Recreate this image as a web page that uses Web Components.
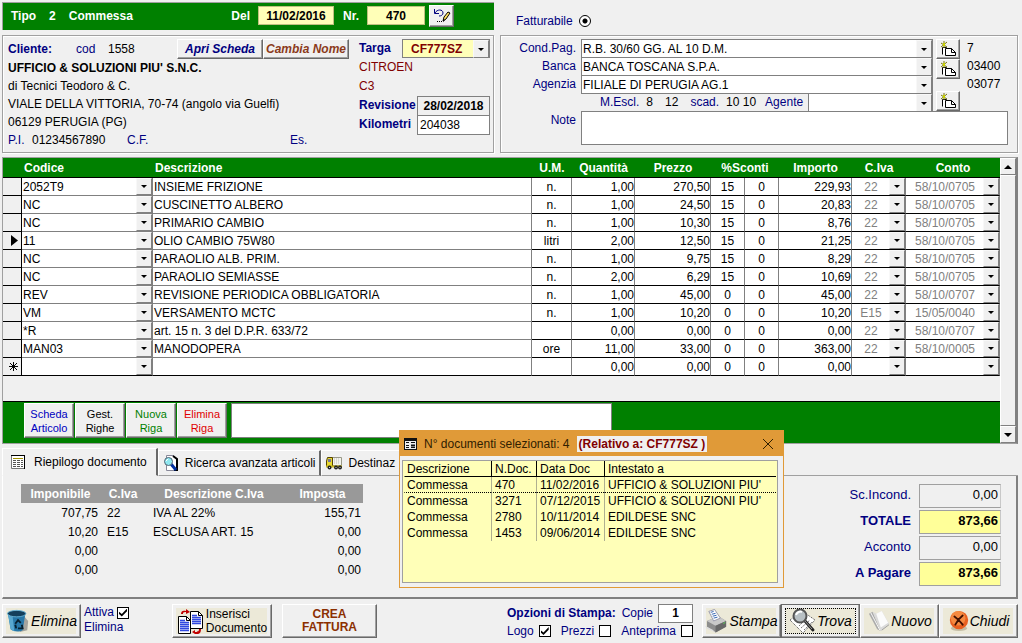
<!DOCTYPE html>
<html lang="it">
<head>
<meta charset="utf-8">
<title>Commessa 470</title>
<style>
  html { background: #f0f0f0; }
  body { margin: 0; font: 12px/18px "Liberation Sans", Arial, sans-serif; color: #000; }
</style>
</head>
<body>
<order-page></order-page>

<script>
/* Shared by every element that holds fields */
const FIELD_CSS = `
  * { box-sizing: border-box; }
  input, select, textarea { font: inherit; color: inherit; margin: 0; border-radius: 0; outline: 0; }
  .navy { color: #000080; }
  .text { border: 1px solid #808080; background: #fff; padding: 0 2px; min-width: 0; }
  .yellow { background: #ffffb8; }
  b, .bold { font-weight: 700; }
  .tick {
    appearance: none; width: 12px; height: 12px; flex: none;
    border: 1px solid #000; background: #fff; display: inline-grid; place-content: center;
  }
  .tick:checked::before {
    content: ""; width: 8px; height: 8px; background: #000;
    clip-path: polygon(0 40%, 35% 70%, 100% 0, 100% 35%, 35% 100%, 0 70%);
  }
`;

const ICONS = {
  undo: `<svg width="18" height="16" viewBox="0 0 18 16" fill="none"><path d="M1.500 1v4.500h4.500M2 5c2-4 8-4 8 0 0 2-2 3-4 3" stroke="#000080"/><path d="M10 13l1-4 4-5 2 1-4 6z" fill="#ffe060" stroke="#000"/><path d="M10 11v3l2-2zM4 13h1v1H4zM6 13h1v1H6zM8 13h1v1H8z" fill="#000"/></svg>`,
  add: `<svg width="16" height="16" viewBox="0 0 16 16" fill="none"><path d="M2.500 13.500v-7h4v7" fill="#fff" stroke="#000"/><path d="M5.500 14.500v-7h6l4 4v3z" fill="#fff" stroke="#000"/><path d="M11.500 7.500v4h4" stroke="#000"/><path d="M1 2l6 4M7 1L1 6M4 0v7" stroke="#77770a"/><path d="M3 2h2v3H3z" fill="#c8d000"/></svg>`,
  sheet: `<svg width="15" height="14" viewBox="0 0 15 14"><path d="M.5.5h13v13H.5z" fill="#fff" stroke="#777"/><path d="M0 .5h14M13.500 0v14" stroke="#000"/><path d="M2 3.500h10M2 5.500h10M2 7.500h10M2 9.500h10M2 11.500h10" stroke="#555" stroke-dasharray="3 1"/><path d="M2 3.500h10" stroke="#a09000"/></svg>`,
  lookup: `<svg width="16" height="16" viewBox="0 0 16 16"><path d="M3.500.5h7l3 3v12h-10z" fill="#fff" stroke="#889"/><path d="M10 1l4 3v11h-3" fill="none" stroke="#000" stroke-width="2"/><path d="M8 9l5 6" stroke="#0030a0" stroke-width="3"/><circle cx="5.500" cy="6.500" r="4" fill="#90e8f0" stroke="#506070"/><path d="M3 6l2-2" stroke="#fff"/></svg>`,
  truck: `<svg width="16" height="14" viewBox="0 0 16 14"><path d="M6.500 1.500h9v8h-9z" fill="#f4f4ec" stroke="#998"/><path d="M8 3h6M8 5h6M8 7h6" stroke="#bbb" stroke-dasharray="1 1"/><path d="M.5 5l1-3.500h5v9H.5z" fill="#e8d830" stroke="#554400"/><path d="M2 3h3v3H2z" fill="#779"/><path d="M0 9.500h16v2H0z" fill="#c8b820"/><circle cx="3.500" cy="11.500" r="2" fill="#222"/><circle cx="10" cy="11.500" r="2" fill="#222"/><circle cx="14" cy="11.500" r="2" fill="#222"/><path d="M3 11h1v1H3zM9.500 11h1v1h-1zM13.500 11h1v1h-1z" fill="#ccc"/></svg>`,
  form: `<svg width="13" height="12" viewBox="0 0 13 12"><path d="M0 0h13v12H0z" fill="#111"/><path d="M1 3h11v8H1z" fill="#eee"/><path d="M2 4.500h3M2 7.500h3M2 9.500h3M7 4.500h4M7 9.500h4" stroke="#111"/><path d="M7 6.500h4v2H7z" fill="#111"/></svg>`,
  bin: `<svg width="25" height="24" viewBox="0 0 27 26"><path d="M17 5l7 8-1 10-8 2z" fill="#777" opacity=".6"/><path d="M2 5l3 17c3 3 10 3 13 1l3-18z" fill="#2878a8"/><path d="M2 5l3 17 4 2L7 7z" fill="#58a8d0"/><ellipse cx="11.500" cy="5" rx="10" ry="3.500" fill="#15405c" stroke="#68b4d8"/><path d="M10 16l3-4 3 3M17 17l1 4h-5M11 21l-1-4" fill="none" stroke="#06202f" stroke-width="2"/></svg>`,
  copy: `<svg width="27" height="26" viewBox="0 0 27 26"><path d="M13.500 3.500h8l4 4v13h-12z" fill="#fff" stroke="#000"/><path d="M21.500 3.500v4h4" fill="none" stroke="#000"/><path d="M15 7.500h5M15 9.500h9M15 11.500h9M15 13.500h9M15 15.500h9" stroke="#3048e0" stroke-width="1.500"/><path d="M1.500 8.500h8l4 4v13h-12z" fill="#fff" stroke="#000"/><path d="M9.500 8.500v4h4" fill="none" stroke="#000"/><path d="M3 12.500h5M3 14.500h9M3 16.500h9M3 18.500h9M3 20.500h9M3 22.500h9" stroke="#3048e0" stroke-width="1.500"/><path d="M4 6c0-3 2-4 5-3V1l4 3-4 2V4C6 4 6 5 6 6zM22 21c0 3-2 3-4 3v-2l-3 2 3 2h2c3 0 4-2 4-5z" fill="#c00000"/></svg>`,
  printer: `<svg width="24" height="26" viewBox="1 0 25 26"><path d="M3 13l12-5 8 5v6l-11 6-9-6z" fill="#8d8d8d"/><path d="M3 13l12-5 8 5-11 5z" fill="#c9c9c9"/><path d="M12 18l11-5v6l-11 6z" fill="#686868"/><path d="M5 3l6-2 6 9-7 3z" fill="#fff" stroke="#99a"/><path d="M7 4l3-1M8 6l4-1M9 8l4-1M10 10l4-1" stroke="#3060b0"/><path d="M1 18l8 4 3 3-9-4z" fill="#ddd"/><path d="M20 15l2-1v1l-2 1z" fill="#5c5"/></svg>`,
  find: `<svg width="28" height="26" viewBox="0 0 28 26"><path d="M1 12L13 3l13 9-12 13z" fill="#fff" stroke="#444" stroke-dasharray="1 1"/><path d="M12 20l9-8M10 18l8-8M15 22l8-8" stroke="#777" stroke-dasharray="2 1"/><path d="M16 13l8 9" stroke="#222" stroke-width="3" stroke-linecap="round"/><path d="M16 13l7 8" stroke="#999"/><circle cx="11" cy="8" r="6.500" fill="#b8c0c4" stroke="#555" stroke-width="2"/><path d="M7 7c1-3 4-4 6-3" stroke="#fff" stroke-width="2" fill="none"/></svg>`,
  page: `<svg width="24" height="22" viewBox="0 0 24 24"><path d="M1 4l9 17 4 2L5 2z" fill="#aaa"/><path d="M5 2l4 2 6-3 8 14-9 8z" fill="#dadada"/><path d="M9 4l6-3 7 13-8 5z" fill="#fbfbfb"/><path d="M3 3l10 19" stroke="#fff"/><path d="M15 22l8-6" stroke="#999"/></svg>`,
  close: `<svg width="22" height="22" viewBox="0 0 22 24"><ellipse cx="11" cy="20" rx="9" ry="3" fill="#c4bda4"/><circle cx="11" cy="11" r="10" fill="#e86020"/><circle cx="10" cy="9" r="8" fill="#f58a40"/><path d="M6 7c3 2 6 5 9 9M15 6c-4 3-6 6-8 10" stroke="#401000" stroke-width="2" stroke-linecap="round" fill="none"/></svg>`
};

/* <ui-icon name> — inline drawing from ICONS */
class UiIcon extends HTMLElement {
  constructor() {
    super();
    this.attachShadow({ mode: 'open' });
  }
  connectedCallback() {
    this.shadowRoot.innerHTML = `
      <style>:host { display: inline-flex; flex: none; } svg { display: block; }</style>
      ${ICONS[this.getAttribute('name')] || ''}
    `;
  }
}
customElements.define('ui-icon', UiIcon);

/* <raised-button> — bevelled push button. Attributes: name (accessible name), focused, art */
class RaisedButton extends HTMLElement {
  constructor() {
    super();
    this.attachShadow({ mode: 'open' });
  }
  connectedCallback() {
    const name = this.getAttribute('name');
    this.shadowRoot.innerHTML = `
      <style>
        :host { display: flex; flex: none; }
        button {
          flex: 1; min-width: 0; box-sizing: border-box; padding: 0; margin: 0;
          display: flex; align-items: center; justify-content: center;
          font: inherit; color: inherit; text-align: center; white-space: nowrap;
          background: #f0f0f0; border: 1px solid; border-color: #fff #696969 #696969 #fff;
          box-shadow: inset -1px -1px 0 #a0a0a0;
        }
        :host([art]) button {
          padding: 2px 3px; background: #ece9d8; font: italic 14px/18px "Liberation Sans", Arial, sans-serif;
          box-shadow: inset -1px -1px 0 #a0a0a0, inset 3px 3px 0 #f0f0f0, inset -4px -3px 0 #f0f0f0;
        }
        :host([focused]) button { border-color: #696969; outline: 1px dotted #000; outline-offset: -5px; }
      </style>
      <button type="button" ${name ? `aria-label="${name}"` : ''}><slot></slot></button>
    `;
  }
}
customElements.define('raised-button', RaisedButton);

/* <combo-box> — dresses the slotted <select> with a bevelled arrow */
class ComboBox extends HTMLElement {
  constructor() {
    super();
    this.attachShadow({ mode: 'open' });
    this.shadowRoot.innerHTML = `
      <style>
        :host { display: grid; min-width: 0; box-sizing: border-box; background: #fff; }
        :host([boxed]) { border: 1px solid #808080; }
        ::slotted(select) {
          grid-area: 1 / 1; appearance: none; width: 100%; min-width: 0; border: 0;
          padding: 0 18px 0 1px; background: transparent; height: 100%;
        }
        .arrow {
          grid-area: 1 / 1; justify-self: end; width: 16px; pointer-events: none; box-sizing: border-box;
          display: grid; place-content: center; background: #f0f0f0;
          border: 1px solid; border-color: #f8f8f8 #808080 #808080 #f8f8f8;
        }
        .arrow::before { content: ""; border: 3px solid transparent; border-top-color: #000; border-bottom: 0; }
      </style>
      <slot></slot><span class="arrow"></span>
    `;
  }
}
customElements.define('combo-box', ComboBox);

/* <group-panel> — etched frame */
class GroupPanel extends HTMLElement {
  constructor() {
    super();
    this.attachShadow({ mode: 'open' });
    this.shadowRoot.innerHTML = `
      <style>
        :host {
          display: block; box-sizing: border-box; border: 1px solid #a0a0a0;
          box-shadow: inset 1px 1px 0 #fff, 1px 1px 0 #fff;
        }
      </style>
      <slot></slot>
    `;
  }
}
customElements.define('group-panel', GroupPanel);

class OrderHeader extends HTMLElement {
  constructor() {
    super();
    this.attachShadow({ mode: 'open' });
    this.shadowRoot.innerHTML = `
      <style>
        ${FIELD_CSS}
        :host { display: grid; grid-template-columns: minmax(0, 492fr) minmax(0, 518fr); gap: 6px; }
        .bar {
          display: flex; align-items: center; gap: 13px; height: 28px; padding: 0 40px 2px 8px;
          background: #008000; color: #fff; font-weight: 700; border: 1px solid #a0a0a0; border-width: 1px 0 0 1px;
        }
        .del { margin-left: auto; }
        label { display: flex; align-items: center; gap: 8px; }
        .text { height: 19px; color: #000; text-align: center; font-weight: 700; border-color: #c0c080; }
        .date { width: 76px; }
        .nr { width: 58px; }
        .tools { display: flex; align-items: center; gap: 4px; margin-left: -4px; }
        raised-button { width: 25px; height: 22px; }
        .bill { align-self: end; justify-self: start; margin: 2px 0 0 16px; height: 18px; color: #000080; gap: 6px; }
        .radio {
          appearance: none; width: 12px; height: 12px; border: 1px solid #000; border-radius: 50%; margin: 0;
          background: radial-gradient(circle, #000 0 2px, #fff 3px);
        }
      </style>
      <div class="bar">
        <span>Tipo</span><span>2</span><span>Commessa</span>
        <label class="del">Del <input class="text yellow date" value="11/02/2016"></label>
        <div class="tools">
          <label>Nr. <input class="text yellow nr" value="470"></label>
          <raised-button name="Modifica numero"><ui-icon name="undo"></ui-icon></raised-button>
        </div>
      </div>
      <label class="bill">Fatturabile <input class="radio" type="radio" name="tipo" checked></label>
    `;
  }
}
customElements.define('order-header', OrderHeader);

class CustomerPanel extends HTMLElement {
  constructor() {
    super();
    this.attachShadow({ mode: 'open' });
    this.shadowRoot.innerHTML = `
      <style>
        ${FIELD_CSS}
        :host { display: block; }
        group-panel { height: 118px; display: flex; gap: 10px; padding: 3px 3px 0 5px; }
        .who { flex: 1; min-width: 0; white-space: nowrap; }
        .row { display: flex; height: 18px; }
        .first { height: 20px; align-items: center; }
        .label { width: 68px; }
        .cod { width: 32px; }
        .actions { display: flex; margin-left: auto; font-weight: 700; font-style: italic; }
        .actions raised-button { width: 86px; height: 20px; }
        .pi { width: 24px; }
        .vat { width: 95px; }
        .cf { width: 163px; }
        .car { flex: none; width: 131px; display: grid; grid-template-columns: 43px 15px 73px; grid-auto-rows: 19px; color: #000080; }
        .car label { font-weight: 700; }
        .car .wide { grid-column: 1 / 3; }
        .car .model { grid-column: 1 / 4; color: #800000; }
        .car combo-box { grid-column: 2 / 4; background: #ffffb8; color: #800000; font-weight: 700; }
        .car select { padding-left: 8px; }
        .car .text { color: #000; height: 20px; }
        .car .rev { background: #f0f0f0; text-align: center; font-weight: 700; }
      </style>
      <group-panel>
        <div class="who">
          <div class="row first">
            <b class="navy label">Cliente:</b><span class="navy cod">cod</span><span>1558</span>
            <div class="actions">
              <raised-button class="navy">Apri Scheda</raised-button>
              <raised-button style="color: #8b3a1a">Cambia Nome</raised-button>
            </div>
          </div>
          <div class="row"><b>UFFICIO &amp; SOLUZIONI PIU' S.N.C.</b></div>
          <div class="row">di Tecnici Teodoro &amp; C.</div>
          <div class="row">VIALE DELLA VITTORIA, 70-74 (angolo via Guelfi)</div>
          <div class="row">06129 PERUGIA (PG)</div>
          <div class="row"><span class="navy pi">P.I.</span><span class="vat">01234567890</span><span class="navy cf">C.F.</span><span class="navy">Es.</span></div>
        </div>
        <div class="car">
          <label for="targa">Targa</label>
          <combo-box boxed><select id="targa"><option>CF777SZ</option></select></combo-box>
          <span class="model">CITROEN</span>
          <span class="model">C3</span>
          <label class="wide" for="rev">Revisione</label><input class="text rev" id="rev" value="28/02/2018">
          <label class="wide" for="km">Kilometri</label><input class="text" id="km" value="204038">
        </div>
      </group-panel>
    `;
  }
}
customElements.define('customer-panel', CustomerPanel);

class PaymentPanel extends HTMLElement {
  constructor() {
    super();
    this.attachShadow({ mode: 'open' });
    this.shadowRoot.innerHTML = `
      <style>
        ${FIELD_CSS}
        :host { display: block; }
        group-panel { height: 118px; padding: 3px 9px 0 0; }
        .top { display: flex; }
        .fields { flex: 1; min-width: 0; display: grid; grid-template-columns: 75px minmax(0, 1fr); column-gap: 5px; grid-auto-rows: 18px; }
        .fields > label, .note label { text-align: right; color: #000080; }
        combo-box { height: 19px; }
        .terms { grid-column: 2; display: flex; padding-left: 19px; white-space: nowrap; }
        .terms span { margin-right: 7px; }
        .terms .num { margin-right: 12px; }
        .terms label { margin-left: 2px; }
        .terms combo-box { width: 125px; margin-left: auto; }
        .adds { width: 24px; margin-left: 3px; display: flex; flex-direction: column; }
        .adds raised-button { height: 20px; }
        .adds raised-button:last-child { margin-top: 12px; }
        .codes { width: 41px; margin-left: 7px; }
        .codes div { height: 18px; }
        .note { display: grid; grid-template-columns: 75px minmax(0, 1fr); column-gap: 5px; }
        textarea { height: 34px; resize: none; display: block; }
      </style>
      <group-panel>
        <div class="top">
          <div class="fields">
            <label for="pag">Cond.Pag.</label><combo-box boxed><select id="pag"><option>R.B. 30/60 GG. AL 10 D.M.</option></select></combo-box>
            <label for="banca">Banca</label><combo-box boxed><select id="banca"><option>BANCA TOSCANA S.P.A.</option></select></combo-box>
            <label for="agenzia">Agenzia</label><combo-box boxed><select id="agenzia"><option>FILIALE DI PERUGIA AG.1</option></select></combo-box>
            <div class="terms">
              <span class="navy">M.Escl.</span><span class="num">8</span><span class="num">12</span>
              <span class="navy">scad.</span><span>10 10</span>
              <label class="navy" for="agente">Agente</label>
              <combo-box boxed><select id="agente"><option></option></select></combo-box>
            </div>
          </div>
          <div class="adds">
            <raised-button name="Nuova condizione"><ui-icon name="add"></ui-icon></raised-button>
            <raised-button name="Nuova banca"><ui-icon name="add"></ui-icon></raised-button>
            <raised-button name="Nuovo agente"><ui-icon name="add"></ui-icon></raised-button>
          </div>
          <div class="codes"><div>7</div><div>03400</div><div>03077</div></div>
        </div>
        <div class="note"><label for="note">Note</label><textarea class="text" id="note"></textarea></div>
      </group-panel>
    `;
  }
}
customElements.define('payment-panel', PaymentPanel);

/* <order-lines> — Properties: rows (Array of [codice, descrizione, um, qta, prezzo, sc1, sc2, importo, iva, conto]) */
class OrderLines extends HTMLElement {
  constructor() {
    super();
    this.attachShadow({ mode: 'open' });
    this._rows = [
      ['2052T9', 'INSIEME FRIZIONE', 'n.', '1,00', '270,50', '15', '0', '229,93', '22', '58/10/0705'],
      ['NC', 'CUSCINETTO ALBERO', 'n.', '1,00', '24,50', '15', '0', '20,83', '22', '58/10/0705'],
      ['NC', 'PRIMARIO CAMBIO', 'n.', '1,00', '10,30', '15', '0', '8,76', '22', '58/10/0705'],
      ['11', 'OLIO CAMBIO 75W80', 'litri', '2,00', '12,50', '15', '0', '21,25', '22', '58/10/0705'],
      ['NC', 'PARAOLIO ALB. PRIM.', 'n.', '1,00', '9,75', '15', '0', '8,29', '22', '58/10/0705'],
      ['NC', 'PARAOLIO SEMIASSE', 'n.', '2,00', '6,29', '15', '0', '10,69', '22', '58/10/0705'],
      ['REV', 'REVISIONE PERIODICA OBBLIGATORIA', 'n.', '1,00', '45,00', '0', '0', '45,00', '22', '58/10/0707'],
      ['VM', 'VERSAMENTO MCTC', 'n.', '1,00', '10,20', '0', '0', '10,20', 'E15', '15/05/0040'],
      ['*R', 'art. 15 n. 3 del D.P.R. 633/72', '', '0,00', '0,00', '0', '0', '0,00', '22', '58/10/0707'],
      ['MAN03', 'MANODOPERA', 'ore', '11,00', '33,00', '0', '0', '363,00', '22', '58/10/0005'],
      ['', '', '', '0,00', '0,00', '0', '0', '0,00', '', '']
    ];
    this.current = 3;
  }

  set rows(val) { this._rows = val || []; this.render(); }
  get rows() { return this._rows; }

  connectedCallback() { this.render(); }

  marker(i) {
    if (i === this.current) return '<svg width="7" height="11"><path d="M0 0l7 5.500L0 11z"/></svg>';
    if (i === this._rows.length - 1) return '<svg width="9" height="9" stroke="#000"><path d="M4.500 0v9M0 4.500h9M1 1l7 7M8 1L1 8"/></svg>';
    return '';
  }

  combo(label, value) {
    return `<combo-box><select aria-label="${label}"><option>${value}</option></select></combo-box>`;
  }

  render() {
    this.shadowRoot.innerHTML = `
      <style>
        ${FIELD_CSS}
        :host { display: flex; border: 1px solid #a0a0a0; border-right: 2px solid #808080; }
        .body { flex: 1; min-width: 0; }
        table { width: 100%; table-layout: fixed; border-spacing: 0; background: #fff; }
        th, td { padding: 0; height: 18px; line-height: 17px; border-bottom: 1px solid #000; white-space: nowrap; overflow: hidden; }
        thead th { height: 20px; line-height: 18px; padding-top: 1px; background: #008000; color: #fff; }
        thead th:nth-child(2), thead th:nth-child(3) { text-align: left; padding-left: 2px; }
        td { border-right: 1px solid #808080; text-align: center; padding-top: 1px; line-height: 16px; }
        tbody th { background: #f0f0f0; border-right: 1px solid #000; padding-right: 3px; text-align: right; }
        tbody th svg { display: block; margin-left: auto; }
        .gray { border-bottom-color: #808080; text-align: left; }
        .desc { padding-left: 1px; }
        .r { text-align: right; }
        .pick { padding: 0; }
        .c select { padding-left: 3px; color: #808080; text-align: center; text-align-last: center; }
        tbody tr:last-child td { border-bottom-color: #000; }
        combo-box { height: 17px; }
        combo-box select { padding-top: 1px; }
        .foot {
          display: flex; gap: 1px; height: 42px; margin-top: 25px; padding: 1px 0 5px 21px;
          background: #008000; border-top: 1px solid #000; font-size: 11px; line-height: 14px;
        }
        .foot raised-button { width: 50px; }
        .foot .text { width: 381px; margin-left: 3px; }
        .scroll { flex: none; width: 16px; display: flex; flex-direction: column; }
        .scroll button, .thumb { padding: 0; border: 1px solid; border-color: #fff #808080 #808080 #fff; background: #f0f0f0; }
        .scroll button { height: 17px; display: grid; place-content: center; }
        .thumb { flex: 1; }
      </style>
      <div class="body">
        <table>
          <colgroup>
            <col style="width: 19px"><col style="width: 131px"><col><col style="width: 40px">
            <col style="width: 63px"><col style="width: 76px"><col style="width: 34px"><col style="width: 34px">
            <col style="width: 73px"><col style="width: 54px"><col style="width: 94px">
          </colgroup>
          <thead><tr>
            <th></th><th>Codice</th><th>Descrizione</th><th>U.M.</th><th>Quantità</th><th>Prezzo</th>
            <th colspan="2">%Sconti</th><th>Importo</th><th>C.Iva</th><th>Conto</th>
          </tr></thead>
          <tbody>
            ${this._rows.map((r, i) => `
              <tr>
                <th>${this.marker(i)}</th>
                <td class="gray pick">${this.combo('Codice', r[0])}</td>
                <td class="gray desc">${r[1]}</td>
                <td>${r[2]}</td>
                <td class="r">${r[3]}</td>
                <td class="r">${r[4]}</td>
                <td>${r[5]}</td>
                <td>${r[6]}</td>
                <td class="r">${r[7]}</td>
                <td class="pick c">${this.combo('C.Iva', r[8])}</td>
                <td class="pick c">${this.combo('Conto', r[9])}</td>
              </tr>
            `).join('')}
          </tbody>
        </table>
        <div class="foot">
          <raised-button style="color: #0000c0">Scheda<br>Articolo</raised-button>
          <raised-button>Gest.<br>Righe</raised-button>
          <raised-button style="color: #008000">Nuova<br>Riga</raised-button>
          <raised-button style="color: #e00000">Elimina<br>Riga</raised-button>
          <input class="text" aria-label="Nota riga">
        </div>
      </div>
      <div class="scroll">
        <button type="button" aria-label="Su"><svg width="8" height="4"><path d="M4 0l4 4H0z"/></svg></button>
        <div class="thumb"></div>
        <button type="button" aria-label="Giù"><svg width="8" height="4"><path d="M0 0h8L4 4z"/></svg></button>
      </div>
    `;
  }
}
customElements.define('order-lines', OrderLines);

class SummaryTabs extends HTMLElement {
  constructor() {
    super();
    this.attachShadow({ mode: 'open' });
    const totals = [['Sc.Incond.', '0,00'], ['TOTALE', '873,66', 1], ['Acconto', '0,00'], ['A Pagare', '873,66', 1]];
    const vat = [['707,75', '22', 'IVA AL 22%', '155,71'], ['10,20', 'E15', 'ESCLUSA ART. 15', '0,00'], ['0,00', '', '', '0,00'], ['0,00', '', '', '0,00']];
    this.shadowRoot.innerHTML = `
      <style>
        ${FIELD_CSS}
        :host { display: block; }
        .tabs { display: flex; align-items: flex-end; height: 28px; }
        .tabs button {
          flex: none; height: 26px; display: flex; align-items: center; gap: 6px; padding: 0 4px; white-space: nowrap;
          font: inherit; background: #f0f0f0; border: 1px solid; border-color: #fff #696969 #a0a0a0 #fff; border-right-width: 2px;
        }
        .tabs button.on { height: 28px; padding: 0 9px 0 8px; gap: 8px; border-bottom-color: #f0f0f0; }
        .rest { flex: 1; align-self: flex-end; border-bottom: 1px solid #a0a0a0; }
        .page {
          display: flex; justify-content: space-between; align-items: flex-start;
          border: 1px solid #fff; border-top: 0; border-right: 2px solid #808080; border-bottom: 2px solid #808080;
          padding: 8px 15px 11px 18px;
        }
        table { border-spacing: 0; width: 342px; table-layout: fixed; }
        th, td { padding: 0; height: 19px; line-height: 18px; text-align: left; white-space: nowrap; }
        th { background: #999; color: #fff; text-align: center; }
        td { padding-left: 7px; }
        td:first-child, td:last-child { text-align: right; padding: 0 2px 0 0; }
        .totals { display: grid; grid-template-columns: auto 82px; gap: 2px 8px; font-size: 13px; }
        .totals label { color: #000080; text-align: right; line-height: 21px; }
        .totals input { height: 24px; text-align: right; padding: 0 2px 3px; border: 1px solid #a0a0a0; border-right-color: #c8c8c8; background: #f0f0f0; }
        .totals input.bold { background: #ffff99; }
      </style>
      <div class="tabs" role="tablist">
        <button class="on" type="button" role="tab" aria-selected="true"><ui-icon name="sheet"></ui-icon>Riepilogo documento</button>
        <button type="button" role="tab"><ui-icon name="lookup"></ui-icon>Ricerca avanzata articoli</button>
        <button type="button" role="tab"><ui-icon name="truck"></ui-icon>Destinaz</button>
        <div class="rest"></div>
      </div>
      <div class="page">
        <table>
          <colgroup><col style="width: 79px"><col style="width: 46px"><col><col style="width: 81px"></colgroup>
          <thead><tr><th>Imponibile</th><th>C.Iva</th><th>Descrizione C.Iva</th><th>Imposta</th></tr></thead>
          <tbody>${vat.map(r => `<tr>${r.map(c => `<td>${c}</td>`).join('')}</tr>`).join('')}</tbody>
        </table>
        <div class="totals">
          ${totals.map((t, i) => `
            <label for="t${i}" class="${t[2] ? 'bold' : ''}">${t[0]}</label>
            <input id="t${i}" class="${t[2] ? 'bold' : ''}" value="${t[1]}" readonly>
          `).join('')}
        </div>
      </div>
    `;
  }
}
customElements.define('summary-tabs', SummaryTabs);

class OrderActions extends HTMLElement {
  constructor() {
    super();
    this.attachShadow({ mode: 'open' });
    this.shadowRoot.innerHTML = `
      <style>
        ${FIELD_CSS}
        :host { display: flex; height: 34px; color: #000080; }
        .group { display: flex; gap: 10px; }
        .art { color: #000; width: 79px; }
        .del { gap: 3px; width: 170px; }
        .del label { line-height: 15px; padding-top: 1px; }
        .del .line { display: flex; align-items: center; gap: 3px; }
        .insert { width: 100px; }
        .insert span { font-size: 12px; font-style: normal; line-height: 14px; text-align: left; margin-left: 2px; }
        .make { width: 95px; color: #8b2f00; font-weight: 700; line-height: 13px; }
        .opts { display: flex; flex-direction: column; width: 186px; }
        .opts div { display: flex; align-items: center; justify-content: space-between; height: 18px; }
        .opts label { display: flex; align-items: center; gap: 5px; }
        .opts .text { width: 35px; height: 19px; text-align: center; font-weight: 700; color: #000; }
        .print { gap: 9px; margin-left: auto; }
        .last { gap: 0; }
      </style>
      <div class="group del">
        <raised-button art class="art"><ui-icon name="bin"></ui-icon>Elimina</raised-button>
        <label><span class="line">Attiva <input class="tick" type="checkbox" checked></span>Elimina</label>
      </div>
      <div class="group">
        <raised-button art class="art insert"><ui-icon name="copy"></ui-icon><span>Inserisci<br>Documento</span></raised-button>
        <raised-button class="make">CREA<br>FATTURA</raised-button>
      </div>
      <div class="group print">
        <div class="opts">
          <div><b>Opzioni di Stampa:</b><label>Copie <input class="text" value="1"></label></div>
          <div>
            <label>Logo <input class="tick" type="checkbox" checked></label>
            <label>Prezzi <input class="tick" type="checkbox"></label>
            <label>Anteprima <input class="tick" type="checkbox"></label>
          </div>
        </div>
        <div class="group last">
          <raised-button art class="art"><ui-icon name="printer"></ui-icon>Stampa</raised-button>
          <raised-button art focused class="art"><ui-icon name="find"></ui-icon>Trova</raised-button>
          <raised-button art class="art"><ui-icon name="page"></ui-icon>Nuovo</raised-button>
          <raised-button art class="art"><ui-icon name="close"></ui-icon>Chiudi</raised-button>
        </div>
      </div>
    `;
  }
}
customElements.define('order-actions', OrderActions);

/* <documents-window> — floating list of the documents found */
class DocumentsWindow extends HTMLElement {
  constructor() {
    super();
    this.attachShadow({ mode: 'open' });
    const docs = [
      ['Commessa', '470', '11/02/2016', 'UFFICIO & SOLUZIONI PIU\''],
      ['Commessa', '3271', '07/12/2015', 'UFFICIO & SOLUZIONI PIU\''],
      ['Commessa', '2780', '10/11/2014', 'EDILDESE SNC'],
      ['Commessa', '1453', '09/06/2014', 'EDILDESE SNC']
    ];
    this.shadowRoot.innerHTML = `
      <style>
        * { box-sizing: border-box; }
        :host { display: block; box-sizing: border-box; width: 385px; border: 1px solid #e09a38; background: #f0f0f0; }
        header { display: flex; align-items: center; gap: 7px; height: 25px; padding: 0 9px 0 4px; background: #e09a38; color: #302000; }
        .title { white-space: nowrap; }
        header b { background: #f0f0f0; color: #800000; padding: 0 2px; line-height: 16px; white-space: pre; }
        header button { margin-left: auto; padding: 0; width: 12px; height: 12px; border: 0; background: none; }
        header svg { display: block; }
        .list { margin: 4px 5px 4px 2px; height: 123px; background: #ffffb8; border: 1px solid #a0a0a0; padding: 0 1px; }
        table { width: 100%; border-spacing: 0; table-layout: fixed; }
        th, td { padding: 0 0 0 3px; height: 16px; line-height: 14px; font-weight: 400; text-align: left; white-space: nowrap; border-left: 1px solid #b0b090; }
        th { border-left-color: #000; border-bottom: 1px solid #000; }
        th:first-child, td:first-child { border-left-color: transparent; padding-left: 2px; }
        .sel td { border-bottom: 1px dotted #000; }
      </style>
      <header>
        <ui-icon name="form"></ui-icon><span class="title">N° documenti selezionati: 4</span>
        <b>(Relativo a: CF777SZ )</b>
        <button type="button" aria-label="Chiudi"><svg width="12" height="12" stroke="#302000"><path d="M1 1l10 10M11 1L1 11"/></svg></button>
      </header>
      <div class="list">
        <table>
          <colgroup><col style="width: 87px"><col style="width: 45px"><col style="width: 68px"><col></colgroup>
          <thead><tr><th>Descrizione</th><th>N.Doc.</th><th>Data Doc</th><th>Intestato a</th></tr></thead>
          <tbody>${docs.map((d, i) => `<tr class="${i ? '' : 'sel'}">${d.map(c => `<td>${c.replace('&', '&amp;')}</td>`).join('')}</tr>`).join('')}</tbody>
        </table>
      </div>
    `;
  }
}
customElements.define('documents-window', DocumentsWindow);

class OrderPage extends HTMLElement {
  constructor() {
    super();
    this.attachShadow({ mode: 'open' });
    this.shadowRoot.innerHTML = `
      <style>
        :host { display: block; position: relative; padding: 2px 4px 4px 2px; }
        order-header { margin-bottom: 5px; }
        .panels { display: grid; grid-template-columns: minmax(0, 492fr) minmax(0, 518fr); gap: 6px; }
        order-lines { margin-top: 4px; }
        summary-tabs { margin-top: 4px; }
        order-actions { margin-top: 5px; }
        documents-window { position: absolute; left: 399px; top: 430px; }
      </style>
      <order-header></order-header>
      <div class="panels">
        <customer-panel></customer-panel>
        <payment-panel></payment-panel>
      </div>
      <order-lines></order-lines>
      <summary-tabs></summary-tabs>
      <order-actions></order-actions>
      <documents-window></documents-window>
    `;
  }
}
customElements.define('order-page', OrderPage);
</script>
</body>
</html>
